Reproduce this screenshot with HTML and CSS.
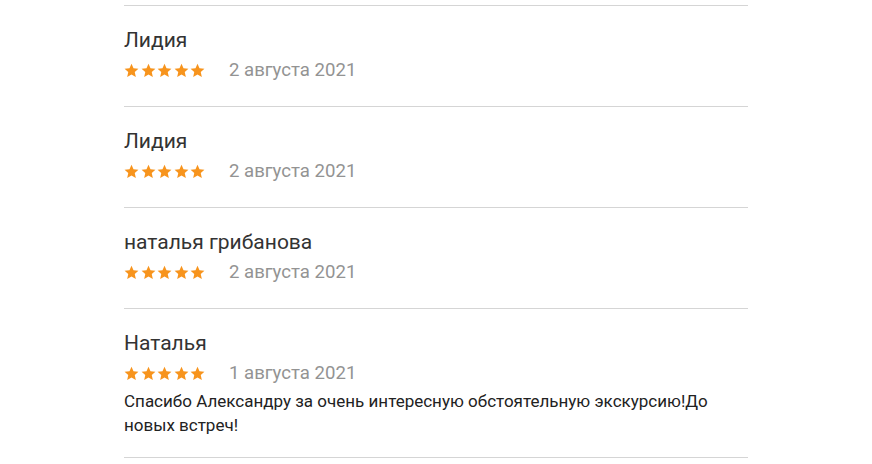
FILE: index.html
```html
<!DOCTYPE html>
<html lang="ru">
<head>
<meta charset="utf-8">
<link rel="stylesheet" href="styles.css">
</head>
<body>
<svg width="0" height="0" class="defs">
  <defs>
    <symbol id="star" viewBox="0 0 24 24"><path d="M12 1.2l3.2 7.1 7.9.8-5.9 5.3 1.7 7.8L12 18.2l-6.9 4 1.7-7.8L.9 9.1l7.9-.8z"/></symbol>
  </defs>
</svg>
<div class="reviews">
  <div class="review">
    <div class="name">Лидия</div>
    <div class="meta">
      <span class="stars"><svg><use href="#star"/></svg><svg><use href="#star"/></svg><svg><use href="#star"/></svg><svg><use href="#star"/></svg><svg><use href="#star"/></svg></span>
      <span class="date">2 августа 2021</span>
    </div>
  </div>
  <div class="review">
    <div class="name">Лидия</div>
    <div class="meta">
      <span class="stars"><svg><use href="#star"/></svg><svg><use href="#star"/></svg><svg><use href="#star"/></svg><svg><use href="#star"/></svg><svg><use href="#star"/></svg></span>
      <span class="date">2 августа 2021</span>
    </div>
  </div>
  <div class="review">
    <div class="name">наталья грибанова</div>
    <div class="meta">
      <span class="stars"><svg><use href="#star"/></svg><svg><use href="#star"/></svg><svg><use href="#star"/></svg><svg><use href="#star"/></svg><svg><use href="#star"/></svg></span>
      <span class="date">2 августа 2021</span>
    </div>
  </div>
  <div class="review">
    <div class="name">Наталья</div>
    <div class="meta">
      <span class="stars"><svg><use href="#star"/></svg><svg><use href="#star"/></svg><svg><use href="#star"/></svg><svg><use href="#star"/></svg><svg><use href="#star"/></svg></span>
      <span class="date">1 августа 2021</span>
    </div>
    <p class="text">Спасибо Александру за очень интересную обстоятельную экскурсию!До новых встреч!</p>
  </div>
</div>
</body>
</html>
```
FILE: styles.css
```css
html, body {
  margin: 0;
  padding: 0;
  background: #fff;
}
body {
  font-family: Roboto, "Noto Sans", sans-serif;
  color: #333;
}
.defs {
  position: absolute;
  width: 0;
  height: 0;
}
.reviews {
  width: 624px;
  margin-left: 124px;
  padding-top: 5px;
  border-bottom: 1px solid #d5d5d5;
}
.review {
  border-top: 1px solid #d5d5d5;
  padding: 21px 0 24px;
}
.name {
  font-size: 21px;
  line-height: 26px;
  color: #333;
}
.meta {
  display: flex;
  align-items: center;
  height: 24px;
  margin-top: 5px;
}
.stars {
  display: flex;
  gap: 1.5px;
  color: #f7941d;
  width: 105px;
  flex-shrink: 0;
}
.stars svg {
  width: 15px;
  height: 15px;
  fill: currentColor;
}
.date {
  font-size: 18.6px;
  line-height: 24px;
  color: #939393;
}
.text {
  margin: 4px 0 -4px;
  font-size: 17px;
  line-height: 24px;
  color: #222;
}
```
